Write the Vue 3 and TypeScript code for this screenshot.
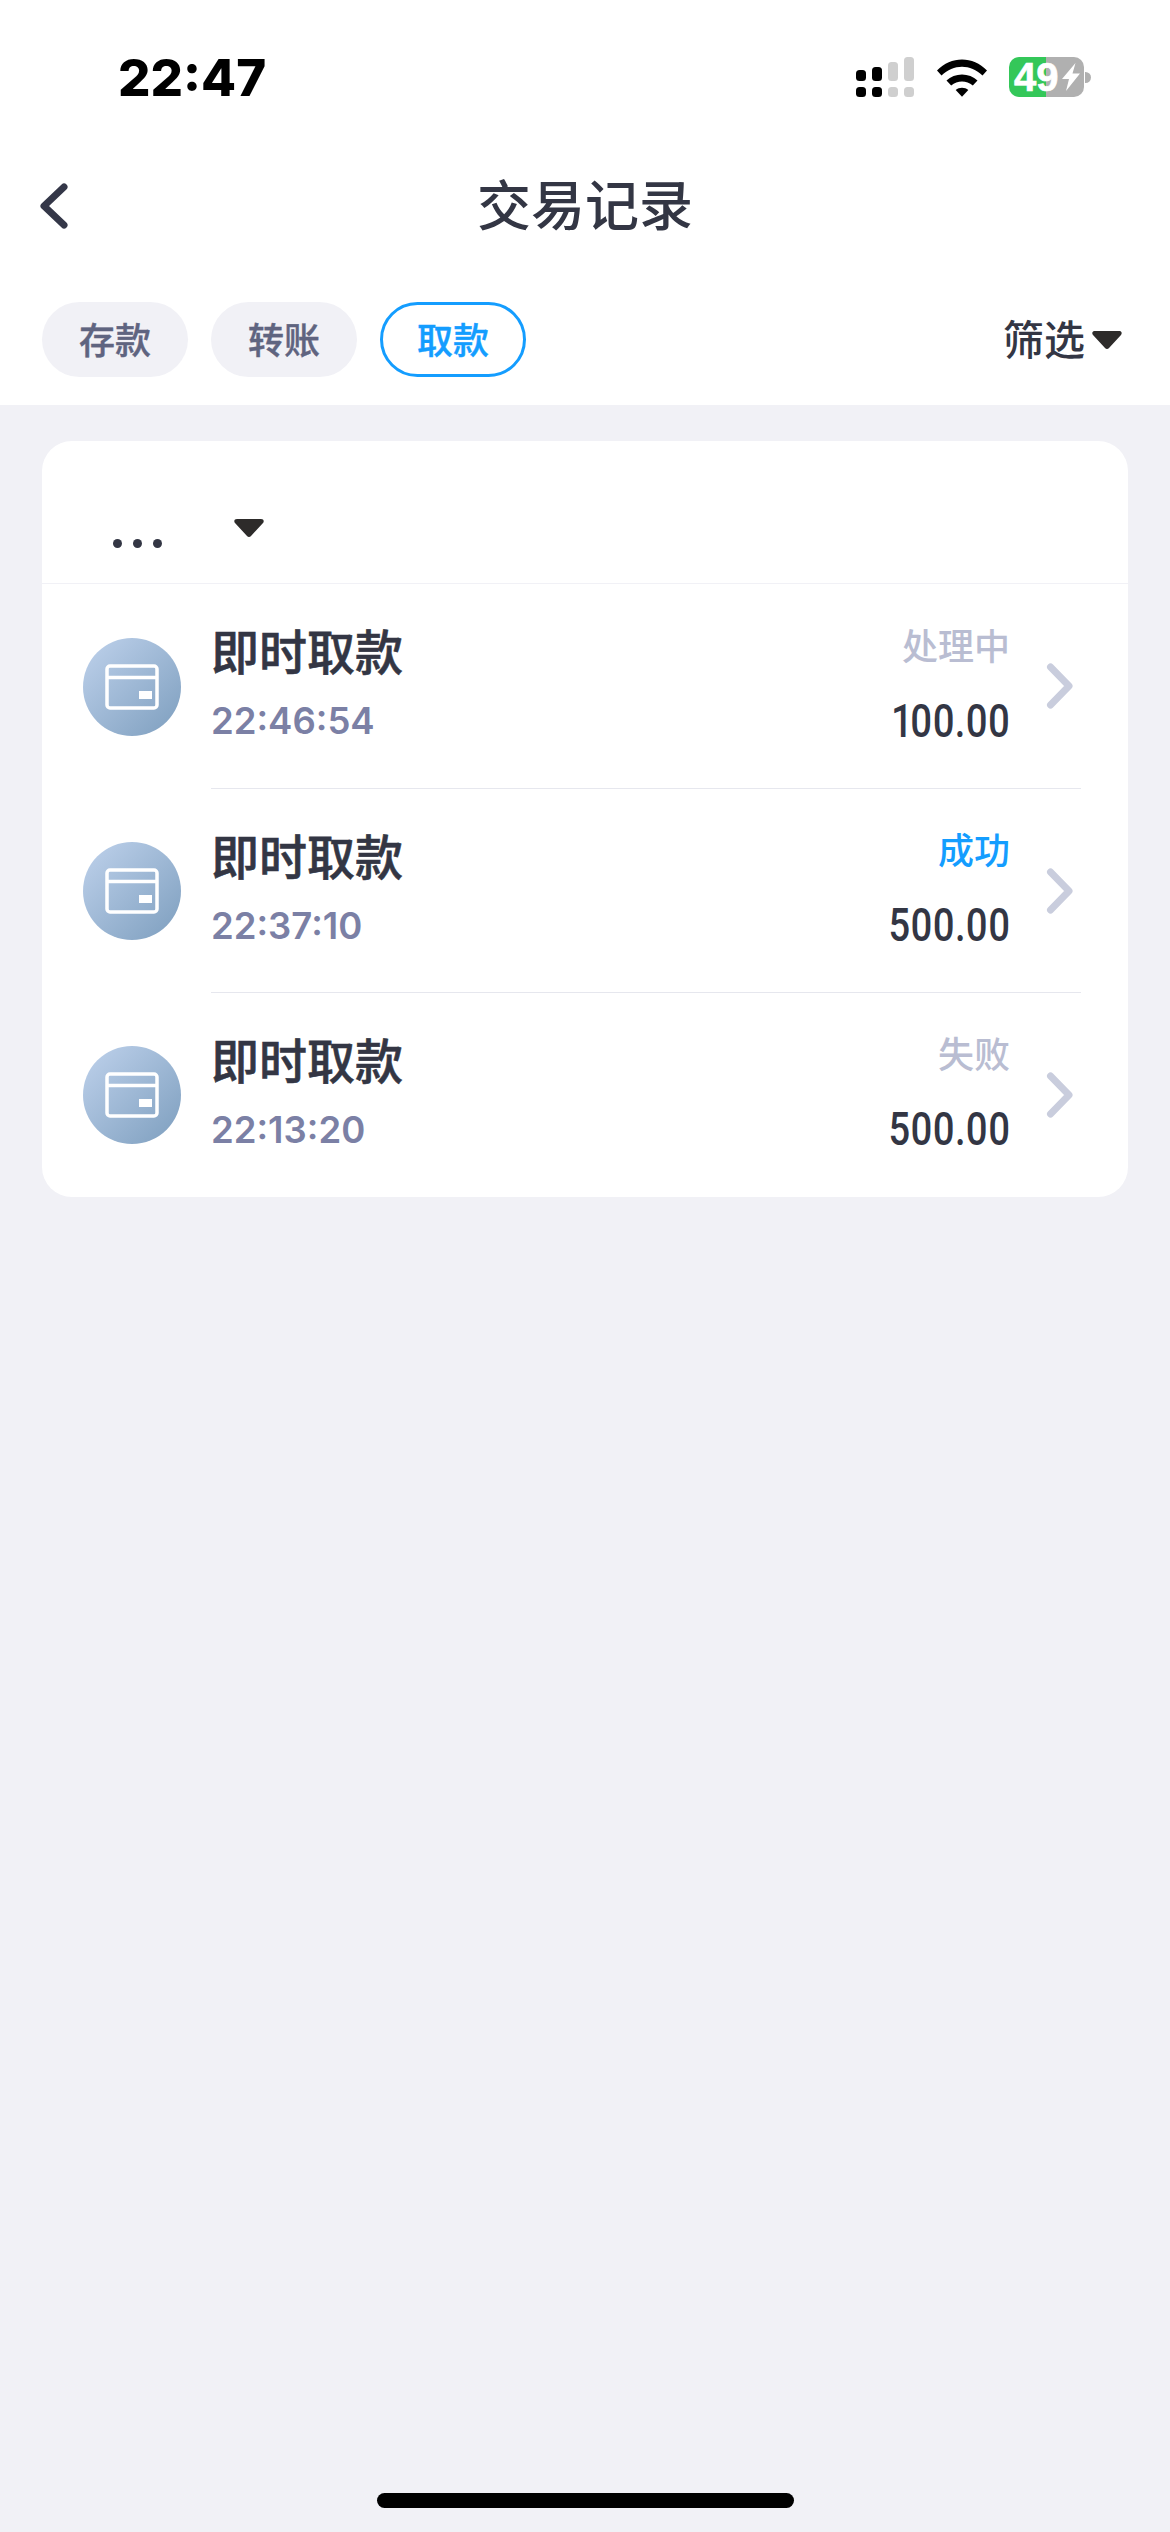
<script setup lang="ts">
interface Row { time: string; status: string; amount: string; success?: boolean }
const rows: Row[] = [
  { time: '22:46:54', status: '处理中', amount: '100.00' },
  { time: '22:37:10', status: '成功', amount: '500.00', success: true },
  { time: '22:13:20', status: '失败', amount: '500.00' },
]
</script>

<template>
  <div class="page">
    <header class="head">
      <div class="status">
        <span class="clock">22:47</span>
        <div class="indicators">
          <svg class="signal" width="60" height="42" viewBox="0 0 60 42">
            <rect x="0" y="14" width="10" height="11" rx="3.5" fill="#000" />
            <rect x="16" y="11" width="10" height="14" rx="3.5" fill="#000" />
            <rect x="32" y="6" width="10" height="19" rx="3.5" fill="#cfcfcf" />
            <rect x="48" y="1" width="10" height="24" rx="3.5" fill="#cfcfcf" />
            <rect x="0" y="31" width="10" height="10" rx="3.5" fill="#000" />
            <rect x="16" y="31" width="10" height="10" rx="3.5" fill="#000" />
            <rect x="32" y="31" width="10" height="10" rx="3.5" fill="#cfcfcf" />
            <rect x="48" y="31" width="10" height="10" rx="3.5" fill="#cfcfcf" />
          </svg>
          <svg class="wifi" width="50" height="38" viewBox="0 0 50 38">
            <path d="M0 11.500C14 -3.200 36 -3.200 50 11.500L45.500 16.500C33.500 4.800 16.500 4.800 4.500 16.500Z" fill="#000" />
            <path d="M9.500 21.500C17.500 13.500 32.500 13.500 40.500 21.500L35.800 26.500C29.500 21 20.500 21 14.200 26.500Z" fill="#000" />
            <path d="M18.700 31C22 28 28 28 31.300 31L25 37.800Z" fill="#000" />
          </svg>
          <div class="battery">
            <div class="cell">
              <span class="level">49</span>
              <svg class="bolt" width="18" height="28" viewBox="0 0 18 28">
                <path d="M13.500 0L0 16H7L4 28L18 10.500H10.500Z" fill="#fff" />
              </svg>
            </div>
            <span class="nub"></span>
          </div>
        </div>
      </div>
      <nav class="nav">
        <svg class="back" width="32" height="50" viewBox="0 0 32 50">
          <path d="M27 6L7 25L27 44" fill="none" stroke="#343748" stroke-width="7" stroke-linecap="round" stroke-linejoin="round" />
        </svg>
        <h1 class="title">交易记录</h1>
      </nav>
      <div class="tabs">
        <span class="tab">存款</span>
        <span class="tab">转账</span>
        <span class="tab active">取款</span>
        <div class="filter">
          <span>筛选</span>
          <svg class="tri" width="32" height="20" viewBox="0 0 32 20">
            <path d="M4 1H28C30.500 1 31.500 3 30 5L18 18C17 19.200 15 19.200 14 18L2 5C0.500 3 1.500 1 4 1Z" fill="#2d2b2a" />
          </svg>
        </div>
      </div>
    </header>

    <main class="main">
      <section class="card">
        <div class="card-top">
          <div class="dots"><i></i><i></i><i></i></div>
          <svg class="tri drop" width="32" height="20" viewBox="0 0 32 20">
            <path d="M4 1H28C30.500 1 31.500 3 30 5L18 18C17 19.200 15 19.200 14 18L2 5C0.500 3 1.500 1 4 1Z" fill="#2d2b2a" />
          </svg>
        </div>
        <div v-for="r in rows" :key="r.time" class="row">
          <div class="avatar">
            <svg width="54" height="46" viewBox="0 0 54 46">
              <rect x="2" y="2" width="50" height="42" rx="3" fill="none" stroke="#fff" stroke-width="3.500" />
              <path d="M2 13.500H52" stroke="#fff" stroke-width="3.500" />
              <rect x="34" y="27" width="13" height="8" fill="#fff" />
            </svg>
          </div>
          <div class="body">
            <div class="left">
              <div class="name">即时取款</div>
              <div class="time">{{ r.time }}</div>
            </div>
            <div class="right">
              <div class="state" :class="{ ok: r.success }">{{ r.status }}</div>
              <div class="amount">{{ r.amount }}</div>
            </div>
            <svg class="chev" width="28" height="48" viewBox="0 0 28 48">
              <path d="M4.500 5L23 24L4.500 43" fill="none" stroke="#c9cddd" stroke-width="7" stroke-linecap="round" stroke-linejoin="round" />
            </svg>
          </div>
        </div>
      </section>
    </main>

    <div class="home"></div>
  </div>
</template>

<style>
html, body { margin: 0; background: #f1f1f6; }
</style>

<style scoped>
.page {
  width: 1170px;
  height: 2532px;
  display: flex;
  flex-direction: column;
  background: #f1f1f6;
  font-family: Inter, "Noto Sans CJK SC", sans-serif;
  color: #333644;
  overflow: hidden;
}
.head { background: #fff; height: 405px; box-sizing: border-box; }
.status {
  height: 156px;
  box-sizing: border-box;
  padding: 50px 79px 0 118px;
  display: flex;
  justify-content: space-between;
  align-items: flex-start;
}
.clock { font-size: 51px; line-height: 56px; font-weight: 800; color: #000; }
.indicators { display: flex; align-items: flex-start; padding-top: 6px; }
.wifi { margin: 3px 0 0 21px; }
.battery { display: flex; align-items: center; margin: 1px 0 0 22px; }
.cell {
  width: 75px;
  height: 40px;
  border-radius: 10px;
  background: linear-gradient(90deg, #34c759 0 37px, #b0b0b0 37px);
  display: flex;
  align-items: center;
  box-sizing: border-box;
  padding-left: 5px;
}
.level {
  font-size: 40px;
  line-height: 40px;
  font-weight: 700;
  color: #fff;
  font-family: "Liberation Sans", sans-serif;
  -webkit-text-stroke: 0.7px #fff;
}
.bolt { margin-left: 3px; flex: none; }
.nub { width: 6px; height: 11px; background: #b0b0b0; border-radius: 0 6px 6px 0; margin-left: 1px; }
.nav {
  height: 102px;
  position: relative;
  display: flex;
  align-items: center;
  justify-content: center;
}
.back { position: absolute; left: 37px; top: 25px; }
.title { margin: 0; font-size: 54px; line-height: 102px; font-weight: 500; }
.tabs {
  margin-top: 44px;
  padding: 0 47px 0 42px;
  display: flex;
  align-items: center;
  gap: 23px;
}
.tab {
  width: 146px;
  height: 75px;
  box-sizing: border-box;
  padding-bottom: 3px;
  border-radius: 38px;
  background: #f1f1f6;
  color: #5f6480;
  font-size: 36px;
  font-weight: 500;
  -webkit-text-stroke: 0.4px currentColor;
  display: flex;
  align-items: center;
  justify-content: center;
}
.tab.active {
  background: #fff;
  color: #149dff;
  border: 3px solid #149dff;
}
.filter {
  margin-left: auto;
  display: flex;
  align-items: center;
  gap: 6px;
  font-size: 41px;
  font-weight: 500;
  line-height: 50px;
  color: #333644;
}
.main { flex: 1; padding: 36px 42px 0; }
.card { background: #fff; border-radius: 30px; height: 756px; overflow: hidden; }
.card-top {
  height: 143px;
  box-sizing: border-box;
  border-bottom: 1px solid #f1f1f6;
  padding: 77px 0 0 71px;
  display: flex;
  align-items: flex-start;
}
.dots { display: flex; gap: 11px; margin-top: 21px; }
.dots i { width: 9px; height: 9px; border-radius: 50%; background: #333644; display: block; }
.drop { margin: 0 0 0 71px; }
.row { height: 204px; display: flex; align-items: center; padding-left: 41px; }
.avatar {
  width: 98px;
  height: 98px;
  border-radius: 50%;
  background: linear-gradient(135deg, #bfd2ec, #7d9ebe);
  display: flex;
  align-items: center;
  justify-content: center;
  flex: none;
  margin-top: 2px;
}
.body {
  margin-left: 30px;
  width: 870px;
  height: 100%;
  box-sizing: border-box;
  display: flex;
  align-items: center;
  border-top: 1px solid #e6e7ee;
}
.card-top + .row .body { border-top: none; }
.left { flex: 1; padding-bottom: 6px; }
.name { font-size: 48px; line-height: 60px; font-weight: 500; -webkit-text-stroke: 0.6px currentColor; }
.time { font-size: 36.500px; line-height: 44px; font-weight: 600; color: #7b80a5; margin-top: 16px; }
.right { text-align: right; }
.state { font-size: 36px; line-height: 44px; font-weight: 500; color: #b9bdd2; }
.state.ok { color: #149dff; }
.amount {
  font-family: Roboto, sans-serif;
  font-size: 47px;
  font-weight: 500;
  font-feature-settings: "pnum";
  line-height: 54px;
  margin-top: 25px;
  color: #333644;
  transform: scaleX(0.81);
  transform-origin: right center;
}
.chev { margin: 0 7px 0 36px; flex: none; }
.home {
  width: 417px;
  height: 15px;
  border-radius: 8px;
  background: #000;
  margin: 0 auto 24px;
}
</style>
